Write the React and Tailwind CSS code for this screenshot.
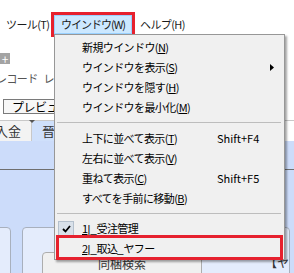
import React from "react";

const items = [
  { label: "新規ウインドウ", k: "N" },
  { label: "ウインドウを表示", k: "S", sub: true },
  { label: "ウインドウを隠す", k: "H" },
  { label: "ウインドウを最小化", k: "M" },
  "sep",
  { label: "上下に並べて表示", k: "T", sc: "Shift+F4" },
  { label: "左右に並べて表示", k: "V" },
  { label: "重ねて表示", k: "C", sc: "Shift+F5" },
  { label: "すべてを手前に移動", k: "B" },
  "sep",
  { num: "1", parts: ["受注管理"], check: true },
  { num: "2", parts: ["取込", "ヤフー"] },
];

const Us = () => (
  <span className="font-['Liberation_Sans',sans-serif] tracking-normal">_</span>
);

const MenuRow = ({ item }) => (
  <div className="grid grid-cols-[27px_135px_53px_1fr] items-center h-[20px]">
    <div className="flex items-center pl-[3px]">
      {item.check && (
        <div className="w-[16px] h-[16px] flex items-center justify-center bg-[#d9e1ea] border border-[#b4c0cd]">
          <svg width="9" height="8" viewBox="0 0 9 8">
            <path d="M1 4 L3.5 6.5 L8 1" stroke="#000" strokeWidth="1.8" fill="none" />
          </svg>
        </div>
      )}
    </div>
    <span className="whitespace-nowrap">
      {item.num ? (
        <>
          <u>{item.num}</u>
          <span className="font-['Liberation_Sans',sans-serif] tracking-normal">|</span>
          {item.parts.map((p, i) => (
            <React.Fragment key={i}>
              <Us />
              {p}
            </React.Fragment>
          ))}
        </>
      ) : (
        <>
          {item.label}(<u>{item.k}</u>)
        </>
      )}
    </span>
    <span className="whitespace-nowrap tracking-normal">{item.sc}</span>
    <div>
      {item.sub && (
        <svg width="4" height="7" viewBox="0 0 4 7">
          <path d="M0 0 L4 3.5 L0 7 Z" fill="#000" />
        </svg>
      )}
    </div>
  </div>
);

const DropMenu = () => (
  <div className="absolute left-[54px] top-[34px] w-[231px] h-[226px] bg-[#f0f0f0] border border-[#979797] shadow-[2px_2px_2px_rgba(0,0,0,0.35)] pt-[2px] text-[11px] tracking-[-0.6px] text-black">
    {items.map((it, i) =>
      it === "sep" ? (
        <div key={i} className="h-[11px] flex items-center pl-[2px] pr-[3px]">
          <div className="w-full h-px bg-[#bdbdbd]" />
        </div>
      ) : (
        <MenuRow key={i} item={it} />
      )
    )}
    <div className="absolute left-[1px] top-[200px] w-[227px] h-[25px] border-[3px] border-[#e6212e]" />
  </div>
);

export default function App() {
  return (
    <div className="relative w-[294px] h-[273px] overflow-hidden bg-white font-['Noto_Sans_CJK_JP',sans-serif] text-[11px] text-[#1a1a1a]">
      <div className="h-[12px]" />
      {/* menu bar */}
      <div className="flex items-center h-[25px] tracking-[-0.6px] whitespace-nowrap">
        <span className="pl-[6px] w-[51px]">ツール(T)</span>
        <div className="w-[84px] h-[25px] border-[3px] border-[#e6212e]">
          <div className="w-full h-full bg-[#cce8ff] border border-[#99d1ff] flex items-center justify-center tracking-[-1px]">
            ウインドウ(W)
          </div>
        </div>
        <span className="pl-[5px]">ヘルプ(H)</span>
      </div>
      {/* toolbar */}
      <div className="h-[16px]" />
      <div className="w-[10px] h-[11px] bg-[#a3a3a3] flex items-center justify-center text-white text-[12px] leading-none">
        +
      </div>
      <div className="flex gap-[6px] mt-[8px] -ml-[4px] h-[13px] items-center text-[#555] tracking-[-0.6px] whitespace-nowrap">
        <span>レコード</span>
        <span>レ</span>
      </div>
      <div className="mt-[14px] ml-[3px] w-[90px] h-[15px] border border-[#7a7a7a] bg-[#f7f7f7] flex items-center pl-[8px] text-[12px] tracking-[-0.5px] text-black whitespace-nowrap">
        プレビュー
      </div>
      {/* tabs */}
      <div className="mt-[6px] flex h-[21px] border-t border-[#c8c8c8] relative whitespace-nowrap">
        <div className="w-[32px] shrink-0 bg-[#f3f3f3] border-r border-[#c8c8c8] flex items-center overflow-hidden text-[13px] text-[#333]">
          <span className="-ml-[5px]">入金</span>
        </div>
        <div className="w-[60px] shrink-0 bg-[#cfe0fb] flex items-center pl-[10px] text-[13px] text-[#333]">晉</div>
        <div className="flex-1 bg-white" />
        <div className="absolute left-[29px] -top-[1px] w-0 h-0 border-l-[3px] border-r-[3px] border-t-[3px] border-l-transparent border-r-transparent border-t-[#555]" />
      </div>
      {/* panel */}
      <div className="bg-[#ccdcfa] h-[28px]" />
      <div className="h-px bg-[#6f6f6f]" />
      <div className="bg-[#ccdcfa] h-[120px] pt-[57px] flex gap-[11px]">
        <div className="w-[12px] -ml-[1px] h-[80px] bg-[#e4ecfc] border border-[#a8b0bd] rounded-tr-[4px]" />
        <div className="flex-1 mr-[4px] h-[80px] bg-[#e4ecfc] border border-[#a8b0bd] rounded-t-[4px] pl-[19px] pt-[24px] flex">
          <div className="w-[160px] h-[30px] bg-[#f0f0f0] border border-[#adadad] rounded-tl-[4px] flex justify-center pt-[2px] text-[12px] text-[#333]">
            同梱検索
          </div>
          <span className="ml-auto pt-[2px] text-[12px] text-[#333] whitespace-nowrap">【ヤ</span>
        </div>
      </div>
      <DropMenu />
    </div>
  );
}
